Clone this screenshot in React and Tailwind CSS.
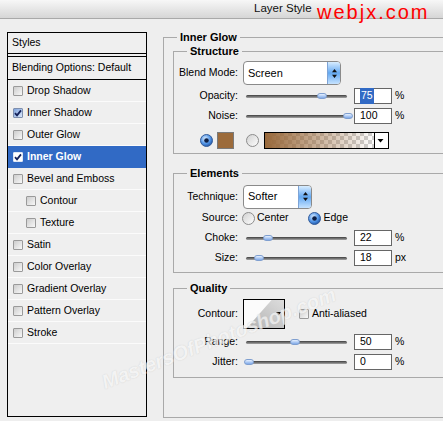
import React from 'react';

const styles = [
  { name: 'Drop Shadow' },
  { name: 'Inner Shadow', checked: true },
  { name: 'Outer Glow' },
  { name: 'Inner Glow', checked: true, active: true },
  { name: 'Bevel and Emboss' },
  { name: 'Contour', sub: true },
  { name: 'Texture', sub: true },
  { name: 'Satin' },
  { name: 'Color Overlay' },
  { name: 'Gradient Overlay' },
  { name: 'Pattern Overlay' },
  { name: 'Stroke' },
];

function CheckBox({ checked, active }) {
  const tone = checked
    ? active
      ? 'bg-white border-[#dfe7f5]'
      : 'bg-linear-to-br from-[#7fa3dc] to-[#dbe7fa] border-[#7e8fae]'
    : 'bg-linear-to-br from-[#cdcdcd] to-[#f8f8f8] border-[#9a9a9a]';
  return (
    <span className={`flex h-[10px] w-[10px] shrink-0 items-center justify-center rounded-[1px] border ${tone}`}>
      {checked && (
        <svg width="8" height="8" viewBox="0 0 8 8">
          <path d="M1 4.2 L3 6.4 L7 1.4" fill="none" stroke="#14215a" strokeWidth="1.8" />
        </svg>
      )}
    </span>
  );
}

function Radio({ on }) {
  return (
    <svg width="13" height="13" viewBox="0 0 13 13" className="shrink-0">
      <defs>
        <radialGradient id="rOn" cx="0.4" cy="0.35" r="0.7">
          <stop offset="0" stopColor="#d9ecff" />
          <stop offset="0.6" stopColor="#4f93e6" />
          <stop offset="1" stopColor="#1d4f9c" />
        </radialGradient>
        <linearGradient id="rOff" x1="0" y1="0" x2="1" y2="1">
          <stop offset="0" stopColor="#d0d0d0" />
          <stop offset="1" stopColor="#ffffff" />
        </linearGradient>
      </defs>
      {on ? (
        <>
          <circle cx="6.5" cy="6.5" r="6" fill="url(#rOn)" stroke="#355c99" />
          <circle cx="6.5" cy="6.5" r="2.3" fill="#0d1f45" />
        </>
      ) : (
        <circle cx="6.5" cy="6.5" r="6" fill="url(#rOff)" stroke="#8c8c8c" />
      )}
    </svg>
  );
}

function Select({ value, width }) {
  return (
    <div className={`ml-[5px] flex h-[24px] overflow-hidden rounded-[4px] border border-[#8a8a8a] bg-white ${width}`}>
      <div className="flex flex-1 items-center pl-[4px] text-[11px]">{value}</div>
      <div className="flex w-[13px] items-center justify-center border-l border-[#7da3d6] bg-linear-to-b from-[#d8edff] via-[#63a8f0] to-[#c6e3ff]">
        <svg width="7" height="11" viewBox="0 0 7 11">
          <path d="M3.5 1 L6 4.3 L1 4.3Z M1 6.7 L6 6.7 L3.5 10Z" fill="#111" />
        </svg>
      </div>
    </div>
  );
}

function Slider({ pos }) {
  return (
    <div className="relative ml-[8px] flex h-[16px] w-[101px] items-center">
      <div className="h-[3px] w-full rounded-full bg-linear-to-b from-[#3f3f3f] to-[#a7a7a7]" />
      <div
        className="absolute top-[5px] h-[6px] w-[10px] rounded-full border border-[#7f9fd0] bg-linear-to-b from-[#e7f1ff] to-[#7fa9e8]"
        style={{ left: pos }}
      />
    </div>
  );
}

function Field({ value, selected }) {
  return (
    <div className="ml-[7px] flex h-[16px] w-[38px] items-center border border-[#666] bg-white pl-[5px] text-[10.5px]">
      {selected ? <span className="bg-[#316ac5] px-[1px] text-white">{value}</span> : value}
    </div>
  );
}

function Row({ label, className, children }) {
  return (
    <div className={`flex items-center ${className}`}>
      <div className="w-[64px] text-right">{label}</div>
      {children}
    </div>
  );
}

function Group({ title, className, children }) {
  return (
    <fieldset className={`w-[300px] border-t border-b border-l border-[#a9a9a9] ${className}`}>
      <legend className="ml-[13px] px-[3px] text-[11px] font-bold leading-[13px]">{title}</legend>
      {children}
    </fieldset>
  );
}

function GradientSwatch() {
  return (
    <svg width="125" height="17" viewBox="0 0 125 17" className="ml-[5px]">
      <defs>
        <pattern id="chk" width="8" height="8" patternUnits="userSpaceOnUse">
          <rect width="8" height="8" fill="#fff" />
          <rect width="4" height="4" fill="#cfcfcf" />
          <rect x="4" y="4" width="4" height="4" fill="#cfcfcf" />
        </pattern>
        <linearGradient id="brown" x1="0" y1="0" x2="1" y2="0">
          <stop offset="0" stopColor="#98683a" stopOpacity="1" />
          <stop offset="1" stopColor="#98683a" stopOpacity="0" />
        </linearGradient>
      </defs>
      <rect x="0.5" y="0.5" width="124" height="16" fill="url(#chk)" />
      <rect x="0.5" y="0.5" width="110" height="16" fill="url(#brown)" />
      <rect x="110" y="0.5" width="14.5" height="16" fill="#fff" />
      <path d="M113.5 7 L119.5 7 L116.5 10.5Z" fill="#000" />
      <line x1="110.5" y1="0" x2="110.5" y2="17" stroke="#000" />
      <rect x="0.5" y="0.5" width="124" height="16" fill="none" stroke="#000" />
    </svg>
  );
}

function ContourSwatch() {
  return (
    <svg width="42" height="30" viewBox="0 0 42 30" className="ml-[5px]">
      <defs>
        <linearGradient id="cg" x1="0" y1="1" x2="1" y2="0">
          <stop offset="0" stopColor="#b0b0b0" />
          <stop offset="1" stopColor="#dedede" />
        </linearGradient>
      </defs>
      <rect x="0.5" y="0.5" width="41" height="29" fill="#fbfbfb" />
      <path d="M3 30 L29 0.5 L42 0.5 L42 30Z" fill="url(#cg)" />
      <path d="M33 13 L38 13 L35.5 16.5Z" fill="#000" />
      <rect x="0.5" y="0.5" width="41" height="29" fill="none" stroke="#000" />
    </svg>
  );
}

export default function App() {
  return (
    <div className="relative h-[421px] w-[443px] overflow-hidden bg-[#eeeeee] font-['Liberation_Sans',Arial,sans-serif] text-[10.5px] text-black">
      <div className="flex h-[19px] items-center border-b border-[#a9a9a9] bg-linear-to-b from-[#f7f7f7] to-[#d6d6d6]">
        <span className="ml-[254px] text-[11.5px] text-[#111]">Layer Style</span>
      </div>
      <span className="absolute left-[317px] top-[0px] text-[20px] leading-[24px] tracking-[2px] text-[#ff0000]">webjx.com</span>

      <div className="flex items-start">
        <div className="ml-[7px] mt-[13px] flex h-[385px] w-[140px] shrink-0 flex-col border border-black bg-[#efefef]">
          <div className="flex h-[21px] items-center border-b border-black pl-[4px]">Styles</div>
          <div className="mt-[2px] flex h-[24px] items-center border-t border-b border-black pl-[4px]">Blending Options: Default</div>
          {styles.map((s) => (
            <div
              key={s.name}
              className={`flex h-[22px] items-center gap-[4px] border-b ${s.sub ? 'pl-[18px]' : 'pl-[5px]'} ${
                s.active ? 'border-[#316ac5] bg-[#316ac5] font-bold text-white' : 'border-[#fbfbfb]'
              }`}
            >
              <CheckBox checked={s.checked} active={s.active} />
              <span>{s.name}</span>
            </div>
          ))}
        </div>

        <fieldset className="ml-[16px] mt-[12px] h-[387px] w-[300px] shrink-0 border-t border-b border-l border-[#a9a9a9]">
          <legend className="ml-[13px] px-[3px] text-[11px] font-bold leading-[13px]">Inner Glow</legend>
          <div className="pl-[9px]">
            <Group title="Structure" className="mt-[1px]">
              <div className="flex flex-col pt-[3px] pb-[4px]">
                <Row label="Blend Mode:" className="h-[24px]">
                  <Select value="Screen" width="w-[98px]" />
                </Row>
                <Row label="Opacity:" className="mt-[3px] h-[16px]">
                  <Slider pos={71} />
                  <Field value="75" selected />
                  <span className="ml-[3px]">%</span>
                </Row>
                <Row label="Noise:" className="mt-[4px] h-[16px]">
                  <Slider pos={97} />
                  <Field value="100" />
                  <span className="ml-[3px]">%</span>
                </Row>
                <div className="mt-[8px] flex h-[17px] items-center pl-[26px]">
                  <Radio on />
                  <span className="ml-[4px] h-[17px] w-[17px] border border-[#7a7a7a] bg-[#9c6b3b]" />
                  <span className="ml-[12px] flex"><Radio /></span>
                  <GradientSwatch />
                </div>
              </div>
            </Group>

            <Group title="Elements" className="mt-[13px]">
              <div className="flex flex-col pt-[5px] pb-[6px]">
                <Row label="Technique:" className="h-[23px]">
                  <Select value="Softer" width="w-[69px]" />
                </Row>
                <Row label="Source:" className="mt-[3px] h-[14px]">
                  <span className="ml-[4px] flex"><Radio /></span>
                  <span className="ml-[2px]">Center</span>
                  <span className="ml-[19px] flex"><Radio on /></span>
                  <span className="ml-[3px]">Edge</span>
                </Row>
                <Row label="Choke:" className="mt-[5px] h-[16px]">
                  <Slider pos={17} />
                  <Field value="22" />
                  <span className="ml-[3px]">%</span>
                </Row>
                <Row label="Size:" className="mt-[4px] h-[16px]">
                  <Slider pos={8} />
                  <Field value="18" />
                  <span className="ml-[3px]">px</span>
                </Row>
              </div>
            </Group>

            <Group title="Quality" className="mt-[9px]">
              <div className="flex flex-col pt-[4px] pb-[7px]">
                <Row label="Contour:" className="h-[30px]">
                  <ContourSwatch />
                  <span className="ml-[14px] flex"><CheckBox /></span>
                  <span className="ml-[3px]">Anti-aliased</span>
                </Row>
                <Row label="Range:" className="mt-[5px] h-[16px]">
                  <Slider pos={44} />
                  <Field value="50" />
                  <span className="ml-[3px]">%</span>
                </Row>
                <Row label="Jitter:" className="mt-[4px] h-[16px]">
                  <Slider pos={-2} />
                  <Field value="0" />
                  <span className="ml-[3px]">%</span>
                </Row>
              </div>
            </Group>
          </div>
        </fieldset>
      </div>

      <span className="pointer-events-none absolute left-[106px] top-[372px] origin-bottom-left -rotate-[21deg] whitespace-nowrap text-[20px] font-bold italic leading-[20px] text-[#f6f6f6] opacity-70 [text-shadow:0_0_1px_#bdbdbd]">
        MastersOfPhotoshop.com
      </span>
    </div>
  );
}
